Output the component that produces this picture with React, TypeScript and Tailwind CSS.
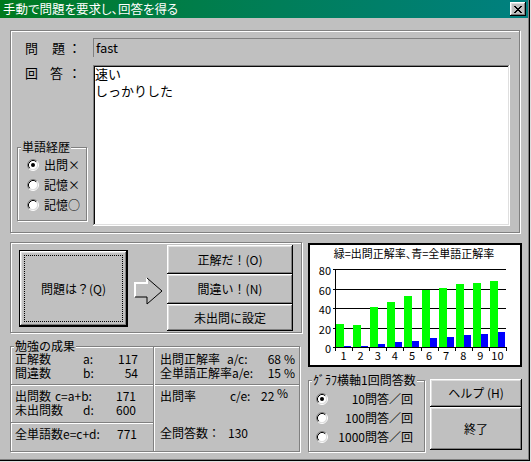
import React from 'react';

const raised =
  'bg-[#c0c0c0] shadow-[inset_-1px_-1px_#000,inset_1px_1px_#fff,inset_-2px_-2px_#808080,inset_2px_2px_#dfdfdf]';
const etched = 'border border-[#808080] shadow-[1px_1px_0_#fff,inset_1px_1px_0_#fff]';

const green = [24, 23, 41, 46, 52, 58, 61, 65, 66, 68];
const blue = [1, 1, 3, 5, 6, 9, 10, 12, 13, 15];

function Radio({ checked }: { checked?: boolean }) {
  return (
    <svg width="12" height="12" viewBox="0 0 12 12" className="shrink-0">
      <circle cx="6" cy="6" r="4.5" fill="#fff" />
      <path d="M2.11 9.89A5.5 5.5 0 0 1 9.89 2.11" fill="none" stroke="#808080" />
      <path d="M9.89 2.11A5.5 5.5 0 0 1 2.11 9.89" fill="none" stroke="#fff" />
      <path d="M2.82 9.18A4.5 4.5 0 0 1 9.18 2.82" fill="none" stroke="#000" />
      <path d="M9.18 2.82A4.5 4.5 0 0 1 2.82 9.18" fill="none" stroke="#dfdfdf" />
      {checked && <circle cx="6" cy="6" r="2" fill="#000" />}
    </svg>
  );
}

function CloseGlyph() {
  return (
    <svg width="8" height="7" viewBox="0 0 8 7" shapeRendering="crispEdges">
      <path
        fill="#000"
        d="M0 0h2v1H0zM6 0h2v1H6zM1 1h2v1H1zM5 1h2v1H5zM2 2h4v1H2zM3 3h2v1H3zM2 4h4v1H2zM1 5h2v1H1zM5 5h2v1H5zM0 6h2v1H0zM6 6h2v1H6z"
      />
    </svg>
  );
}

function Arrow() {
  return (
    <svg width="29" height="28" viewBox="0 0 29 28" className="shrink-0">
      <polyline points="1,20 1,6 13,6 13,1" fill="none" stroke="#fff" strokeWidth="2" />
      <polyline points="13,1 28,14 13,27 13,20 1,20" fill="none" stroke="#000" strokeWidth="1" />
    </svg>
  );
}

function Chart() {
  const x0 = 25;
  const gw = 17.1;
  const y0 = 102;
  const k = 0.975;
  return (
    <div className="mt-[1px] w-[214px] h-[124px] border-2 border-black bg-white">
      <svg width="210" height="120" viewBox="0 0 210 120" className="block">
        <text
          x="104"
          y="8"
          textAnchor="middle"
          dominantBaseline="central"
          fontSize="11"
          className="[font-feature-settings:'palt']"
        >
          緑=出問正解率、青=全単語正解率
        </text>
        {[0, 20, 40, 60, 80].map((v) => {
          const y = Math.round(y0 - v * k) + 0.5;
          return (
            <g key={v}>
              <line x1="23" x2="196" y1={y} y2={y} stroke="#000" shapeRendering="crispEdges" />
              <text x="21" y={y} textAnchor="end" dominantBaseline="central" fontSize="11">
                {v}
              </text>
            </g>
          );
        })}
        <line x1="25.5" x2="25.5" y1="24" y2="102" stroke="#000" shapeRendering="crispEdges" />
        {green.map((g, i) => {
          const gx = Math.round(x0 + i * gw);
          return (
            <g key={i}>
              <rect x={gx + 1} y={y0 - g * k} width="8" height={g * k} fill="#00ff00" shapeRendering="crispEdges" />
              <rect
                x={gx + 9}
                y={y0 - blue[i] * k}
                width="7"
                height={blue[i] * k}
                fill="#0000ff"
                shapeRendering="crispEdges"
              />
            </g>
          );
        })}
        {Array.from({ length: 11 }).map((_, i) => {
          const x = Math.round(x0 + i * gw) + 0.5;
          return <line key={i} x1={x} x2={x} y1="102" y2="106" stroke="#000" shapeRendering="crispEdges" />;
        })}
        <line x1="25" x2="196" y1="102.5" y2="102.5" stroke="#000" shapeRendering="crispEdges" />
        {green.map((_, i) => (
          <text
            key={i}
            x={x0 + (i + 0.5) * gw}
            y="110"
            textAnchor="middle"
            dominantBaseline="central"
            fontSize="11"
          >
            {i + 1}
          </text>
        ))}
      </svg>
    </div>
  );
}

export default function App() {
  return (
    <div className="w-[531px] h-[462px] bg-[#c0c0c0] overflow-hidden whitespace-nowrap text-black text-[12px] font-['Noto_Sans_CJK_JP',sans-serif] shadow-[inset_-1px_-1px_#dfdfdf,inset_-2px_-2px_#000,inset_-3px_-3px_#808080]">
      {/* title bar */}
      <div className="flex items-center w-[528px] h-[18px] bg-linear-to-r from-[#007a1c] to-[#008080]">
        <span className="ml-[3px] text-white text-[12.5px] leading-[14px] [font-feature-settings:'palt']">
          手動で問題を要求し、回答を得る
        </span>
        <div className={`ml-auto mr-[2px] w-[16px] h-[14px] flex items-center justify-center ${raised}`}>
          <CloseGlyph />
        </div>
      </div>

      <div className="w-[528px]">
        {/* question / answer panel */}
        <div className={`mt-[12px] ml-[10px] w-[510px] h-[203px] flex flex-col ${etched}`}>
          <div className="flex items-center mt-[7px] h-[19px]">
            <div className="w-[82px] pl-[14px] flex text-[13px] leading-[16px]">
              <span className="w-[27px]">問</span>
              <span className="w-[16px]">題</span>
              <span>：</span>
            </div>
            <div className="w-[418px] h-[19px] border-t border-l border-[#808080] border-b-white border-r-white flex items-center pl-[2px] text-[13px] leading-[16px]">
              fast
            </div>
          </div>
          <div className="flex mt-[8px]">
            <div className="w-[82px] flex flex-col">
              <div className="pl-[14px] flex text-[13px] leading-[16px]">
                <span className="w-[25px]">回</span>
                <span className="w-[18px]">答</span>
                <span>：</span>
              </div>
              <div className={`relative mt-[66px] ml-[6px] w-[70px] h-[74px] flex flex-col pt-[11px] gap-[8px] ${etched}`}>
                <span className="absolute left-[3px] -top-[8px] px-[1px] bg-[#c0c0c0] leading-[14px]">単語経歴</span>
                {[
                  ['出問×', true],
                  ['記憶×', false],
                  ['記憶○', false],
                ].map(([label, on]) => (
                  <div key={label as string} className="flex items-center h-[12px] pl-[9px] gap-[5px]">
                    <Radio checked={on as boolean} />
                    <span className="leading-[12px]">{label as string}</span>
                  </div>
                ))}
              </div>
            </div>
            <div className="w-[417px] h-[161px] bg-white pl-[2px] text-[13px] shadow-[inset_-1px_-1px_#fff,inset_1px_1px_#808080,inset_-2px_-2px_#dfdfdf,inset_2px_2px_#0a0a0a] pt-[2px]">
              <div className="leading-[13px]">速い</div>
              <div className="leading-[13px] mt-[4px]">しっかりした</div>
            </div>
          </div>
        </div>

        {/* bottom area */}
        <div className="flex mt-[9px] ml-[10px]">
          <div className="w-[292px] flex flex-col">
            <div className={`h-[91px] flex items-start ${etched}`}>
              <div className="ml-[8px] mt-[7px] w-[109px] h-[77px] border border-black p-[4px] shadow-[inset_-1px_-1px_#000,inset_1px_1px_#fff,inset_-2px_-2px_#808080,inset_2px_2px_#dfdfdf]">
                <div className="w-full h-full border border-dotted border-black flex items-center justify-center">
                  問題は？(Q)
                </div>
              </div>
              <div className="ml-[6px] mt-[34px]">
                <Arrow />
              </div>
              <div className="ml-[4px] mt-[2px] w-[126px] flex flex-col">
                <div className={`h-[29px] flex items-center justify-center ${raised}`}>正解だ！(O)</div>
                <div className={`h-[30px] flex items-center justify-center ${raised}`}>間違い！(N)</div>
                <div className={`h-[27px] flex items-center justify-center ${raised}`}>未出問に設定</div>
              </div>
            </div>

            {/* study results */}
            <div className={`relative mt-[13px] w-[290px] h-[106px] flex ${etched}`}>
              <span className="absolute left-[3px] -top-[8px] px-[1px] bg-[#c0c0c0] leading-[14px]">勉強の成果</span>
              <div className="w-[142px] flex flex-col">
                <div className="h-[37px] pt-[5px] pl-[4px]">
                  <div className="flex leading-[14px]">
                    <span className="w-[68px]">正解数</span>
                    <span className="w-[25px]">a:</span>
                    <span className="w-[30px] text-right">117</span>
                  </div>
                  <div className="flex leading-[14px]">
                    <span className="w-[68px]">間違数</span>
                    <span className="w-[25px]">b:</span>
                    <span className="w-[30px] text-right">54</span>
                  </div>
                </div>
                <div className="h-[2px] border-t border-[#808080] border-b border-b-white" />
                <div className="h-[36px] pt-[3px] pl-[4px]">
                  <div className="flex leading-[14px]">
                    <span className="w-[40px]">出問数</span>
                    <span className="w-[48px]">c=a+b:</span>
                    <span className="w-[33px] text-right">171</span>
                  </div>
                  <div className="flex leading-[14px]">
                    <span className="w-[68px]">未出問数</span>
                    <span className="w-[20px]">d:</span>
                    <span className="w-[33px] text-right">600</span>
                  </div>
                </div>
                <div className="h-[2px] border-t border-[#808080] border-b border-b-white" />
                <div className="flex-1 pt-[3px] pl-[4px]">
                  <div className="flex leading-[14px]">
                    <span className="w-[92px]">全単語数e=c+d:</span>
                    <span className="w-[30px] text-right">771</span>
                  </div>
                </div>
              </div>
              <div className="w-[2px] border-l border-[#808080] border-r border-r-white" />
              <div className="flex-1 flex flex-col">
                <div className="h-[37px] pt-[5px] pl-[5px]">
                  <div className="flex leading-[14px]">
                    <span className="w-[67px]">出問正解率</span>
                    <span className="w-[35px]">a/c:</span>
                    <span className="w-[19px] text-right">68</span>
                    <span className="ml-[3px]">%</span>
                  </div>
                  <div className="flex leading-[14px]">
                    <span className="w-[102px]">全単語正解率a/e:</span>
                    <span className="w-[19px] text-right">15</span>
                    <span className="ml-[3px]">%</span>
                  </div>
                </div>
                <div className="h-[2px] border-t border-[#808080] border-b border-b-white" />
                <div className="flex-1 pt-[3px] pl-[5px]">
                  <div className="flex leading-[14px]">
                    <span className="w-[70px]">出問率</span>
                    <span className="w-[31px]">c/e:</span>
                    <span className="w-[13px] text-right">22</span>
                    <span className="ml-[3px] relative -top-[3px]">%</span>
                  </div>
                  <div className="flex leading-[14px] mt-[23px]">
                    <span className="w-[48px]">全問答数</span>
                    <span className="w-[12px]">：</span>
                    <span className="pl-[8px]">130</span>
                  </div>
                </div>
              </div>
            </div>
          </div>

          <div className="ml-[6px] w-[214px] flex flex-col">
            <Chart />
            <div className="flex mt-[12px]">
              <div className={`relative mt-[1px] w-[117px] h-[72px] flex flex-col pt-[12px] gap-[7px] ${etched}`}>
                <span className="absolute left-[3px] -top-[8px] px-[1px] bg-[#c0c0c0] leading-[14px]">ｸﾞﾗﾌ横軸1回問答数</span>
                {[
                  ['10問答／回', true],
                  ['100問答／回', false],
                  ['1000問答／回', false],
                ].map(([label, on]) => (
                  <div key={label as string} className="flex items-center h-[12px] pl-[7px]">
                    <Radio checked={on as boolean} />
                    <span className="flex-1 text-right pr-[11px] leading-[12px]">{label as string}</span>
                  </div>
                ))}
              </div>
              <div className="ml-[5px] w-[92px] flex flex-col">
                <div className={`h-[28px] flex items-center justify-center ${raised}`}>ヘルプ (H)</div>
                <div className={`h-[43px] flex items-center justify-center ${raised}`}>終了</div>
              </div>
            </div>
          </div>
        </div>
      </div>
    </div>
  );
}
